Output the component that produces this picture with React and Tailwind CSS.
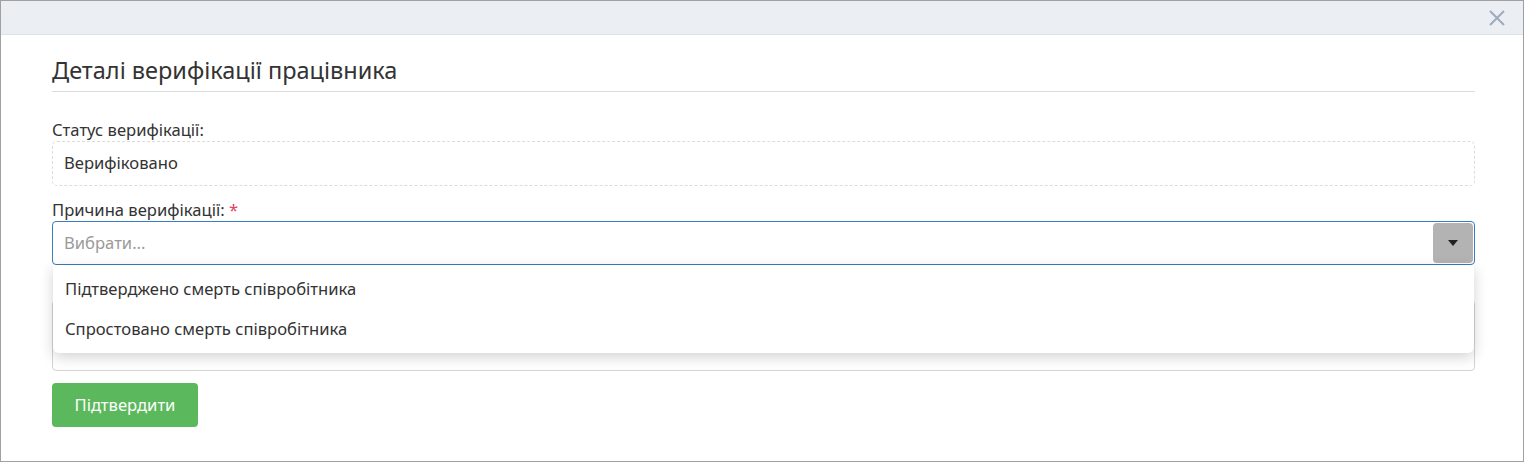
import React from "react";

const font = { fontFamily: '"Noto Sans", "Open Sans", sans-serif' };

function CloseIcon() {
  return (
    <svg width="18" height="18" viewBox="0 0 18 18" className="text-[#9eabbd]">
      <path d="M2 2 L16 16 M16 2 L2 16" stroke="currentColor" strokeWidth="2" fill="none" />
    </svg>
  );
}

export default function App() {
  const options = ["Підтверджено смерть співробітника", "Спростовано смерть співробітника"];

  return (
    <div
      className="w-[1524px] h-[462px] border border-[#a0a0a0] bg-white flex flex-col text-[#333]"
      style={font}
    >
      <div className="h-[34px] shrink-0 bg-[#ebeef3] border-b border-[#dde2e9] flex items-center justify-end pr-[17px]">
        <CloseIcon />
      </div>

      <div className="pl-[51px] pr-[48px] pt-[20px]">
        <h2 className="text-[23.5px] leading-[30px] font-normal text-[#333] pb-[6px] border-b border-[#dcdcdc]">
          Деталі верифікації працівника
        </h2>

        <div className="mt-[27px] text-[16.6px] leading-[22px]">Статус верифікації:</div>
        <div className="h-[45px] border border-dashed border-[#dcdcdc] rounded-[5px] flex items-center px-[11px] text-[16.6px]">
          Верифіковано
        </div>

        <div className="mt-[13px] text-[16.6px] leading-[22px]">
          Причина верифікації: <span className="text-[#e0435a]">*</span>
        </div>
        <div className="relative">
          <div className="h-[44px] border border-[#3b7bbf] rounded-[4px] flex items-center justify-between pl-[11px] pr-[1px]">
            <span className="text-[16.6px] text-[#9a9a9a]">Вибрати...</span>
            <div className="w-[40px] h-[40px] bg-[#b3b3b3] rounded-[4px] flex items-center justify-center">
              <div className="w-0 h-0 border-l-[5px] border-r-[5px] border-t-[6px] border-l-transparent border-r-transparent border-t-[#222]" />
            </div>
          </div>

          <div className="absolute left-[1px] right-[1px] top-full z-10 bg-white rounded-b-[6px] shadow-[0_4px_14px_rgba(0,0,0,0.18)] py-[4px]">
            {options.map((o) => (
              <div key={o} className="h-[40px] flex items-center px-[12px] text-[16.6px] text-[#333]">
                {o}
              </div>
            ))}
          </div>
        </div>

        <div className="mt-[13px] h-[22px]" />
        <div className="h-[71px] border border-[#d4d4d4] rounded-[4px]" />

        <button className="mt-[12px] w-[146px] h-[44px] bg-[#5cb85c] text-white text-[16.6px] rounded-[4px]">
          Підтвердити
        </button>
      </div>
    </div>
  );
}
